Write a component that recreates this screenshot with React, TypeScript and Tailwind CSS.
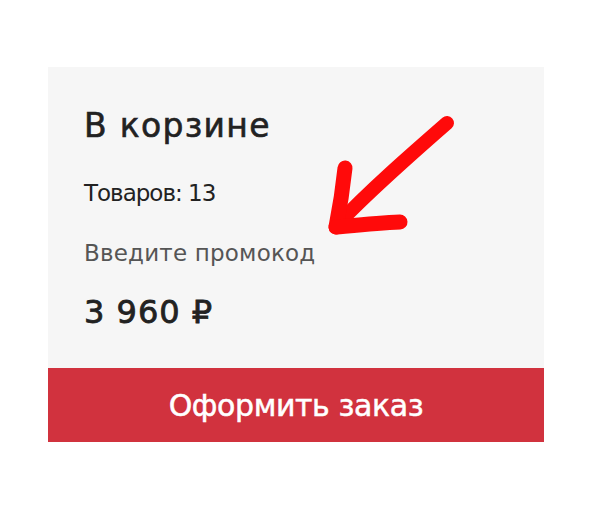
import React from "react";

export default function App() {
  return (
    <div className="w-[600px] h-[512px] bg-white pt-[67px] pl-[48px]" style={{ fontFamily: '"DejaVu Sans", "Noto Sans", sans-serif' }}>
      <div className="relative w-[496px] bg-[#f6f6f6]">
        <div className="flex flex-col px-[36px] pt-[42px] pb-[40px]">
          <div className="text-[33px] leading-none text-[#222222] tracking-[1.3px] [-webkit-text-stroke:0.6px_#222222]">В корзине</div>
          <div className="mt-[40px] text-[23px] leading-none text-[#222222] tracking-[-1px]">Товаров: 13</div>
          <div className="mt-[37px] text-[23px] leading-none text-[#555555] tracking-[0.2px]">Введите промокод</div>
          <div className="mt-[31px] text-[32px] leading-none text-[#222222] tracking-[1px] [-webkit-text-stroke:0.8px_#222222]">3 960 ₽</div>
        </div>
        <div className="h-[74px] bg-[#d1323e] flex items-center justify-center text-white text-[30px] tracking-[-0.4px] [-webkit-text-stroke:0.5px_#ffffff]">
          Оформить заказ
        </div>
        <svg className="absolute left-0 top-0" width="496" height="300" viewBox="0 0 496 300" fill="none">
          <g stroke="#ff0a0a" strokeLinecap="round" strokeLinejoin="round">
            <path d="M399 56 C 360 90 320 125 289 158" strokeWidth="14" />
            <path d="M297 101 C 295 120 292 140 288 160" strokeWidth="15" />
            <path d="M288 160 C 310 158 330 156 352 155" strokeWidth="15" />
          </g>
        </svg>
      </div>
    </div>
  );
}
